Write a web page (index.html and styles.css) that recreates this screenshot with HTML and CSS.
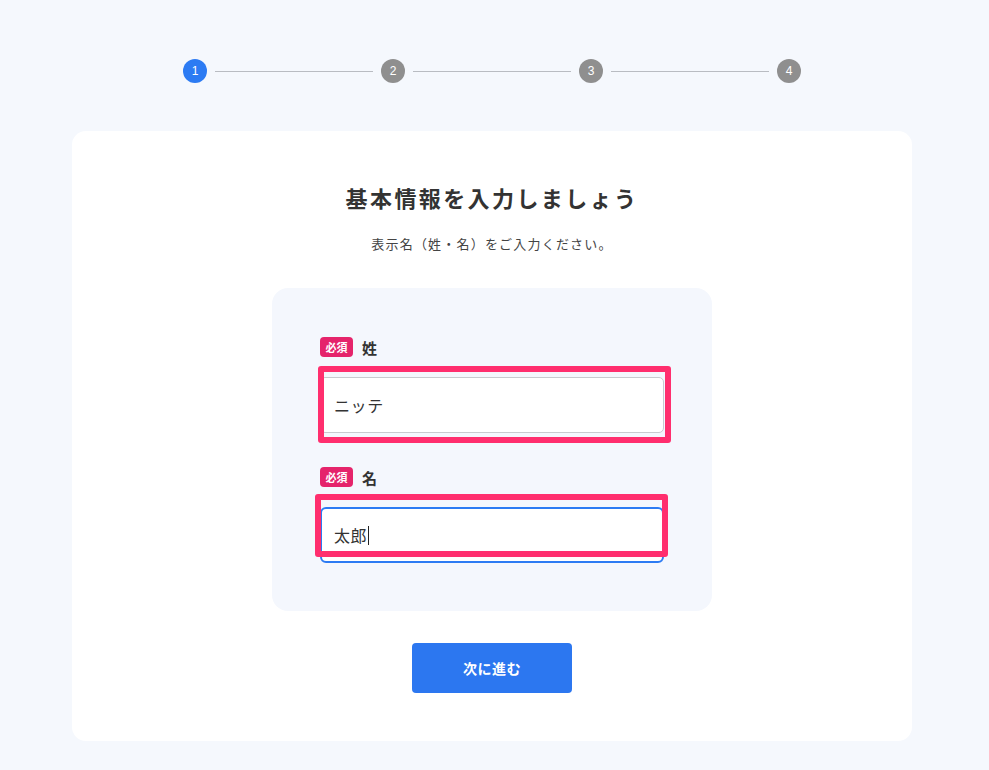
FILE: index.html
```html
<!DOCTYPE html>
<html lang="ja">
<head>
<meta charset="utf-8">
<title>基本情報を入力しましょう</title>
<link rel="stylesheet" href="styles.css">
</head>
<body>
<div class="page">
  <div class="stepper">
    <div class="step active">1</div>
    <div class="line"></div>
    <div class="step">2</div>
    <div class="line"></div>
    <div class="step">3</div>
    <div class="line"></div>
    <div class="step">4</div>
  </div>

  <div class="card">
    <h1 class="title">基本情報を入力しましょう</h1>
    <p class="subtitle">表示名（姓・名）をご入力ください。</p>

    <div class="form-box">
      <div class="field">
        <div class="label-row">
          <span class="badge">必須</span>
          <span class="label">姓</span>
        </div>
        <div class="input-wrap">
          <div class="input">ニッテ</div>
          <div class="highlight hl-first"></div>
        </div>
      </div>

      <div class="field">
        <div class="label-row">
          <span class="badge">必須</span>
          <span class="label">名</span>
        </div>
        <div class="input-wrap">
          <div class="input focused">太郎<span class="caret"></span></div>
          <div class="highlight hl-second"></div>
        </div>
      </div>
    </div>

    <button class="next-btn">次に進む</button>
  </div>
</div>
</body>
</html>
```

FILE: styles.css
```css
* { box-sizing: border-box; }

body {
  margin: 0;
  padding: 0 5px 0 0;
  background: #f5f8fd;
  font-family: "Noto Sans CJK JP", "Noto Sans", sans-serif;
  color: #333;
}

.page {
  width: 840px;
  margin: 0 auto;
  padding-top: 59px;
  padding-bottom: 29px;
}

.stepper {
  width: 618px;
  margin: 0 auto;
  display: flex;
  align-items: center;
  gap: 8px;
}

.step {
  width: 24px;
  height: 24px;
  border-radius: 50%;
  background: #8f8f8f;
  color: #fff;
  font-family: "Liberation Sans", Arial, sans-serif;
  font-size: 12px;
  display: flex;
  align-items: center;
  justify-content: center;
  flex: none;
}

.step.active { background: #2c7bf3; }

.line {
  flex: 1;
  height: 1px;
  background: #b9bcc2;
}

.card {
  margin-top: 48px;
  background: #fff;
  border-radius: 14px;
  padding: 50px 0 48px;
  display: flex;
  flex-direction: column;
  align-items: center;
}

.title {
  margin: 0;
  font-size: 22px;
  line-height: 32px;
  font-weight: 700;
  letter-spacing: 2.4px;
  color: #333;
}

.subtitle {
  margin: 21px 0 0;
  font-size: 13px;
  line-height: 20px;
  letter-spacing: 1.2px;
  color: #444;
}

.form-box {
  margin-top: 34px;
  width: 440px;
  background: #f4f7fd;
  border-radius: 16px;
  padding: 49px 48px 48px;
  display: flex;
  flex-direction: column;
  gap: 34px;
}

.label-row {
  display: flex;
  align-items: center;
  gap: 9px;
  height: 20px;
  margin-bottom: 20px;
}

.badge {
  width: 33px;
  height: 20px;
  border-radius: 4px;
  background: #e5246b;
  color: #fff;
  font-size: 11px;
  font-weight: 700;
  display: flex;
  align-items: center;
  justify-content: center;
}

.label {
  font-size: 15px;
  font-weight: 700;
  color: #333;
}

.input-wrap { position: relative; }

.input {
  height: 56px;
  border: 1px solid #c8cacf;
  border-radius: 5px;
  background: #fff;
  padding: 0 13px;
  font-size: 16px;
  letter-spacing: 0.6px;
  color: #333;
  display: flex;
  align-items: center;
}

.input.focused {
  border: 2px solid #2c7bf3;
  border-radius: 6px;
  padding-left: 12px;
}

.caret {
  display: inline-block;
  width: 1px;
  height: 19px;
  background: #222;
  margin-left: 1px;
}

.highlight {
  position: absolute;
  border: 6px solid #ff2e6e;
  border-radius: 3px;
  pointer-events: none;
}

.hl-first {
  left: -2px;
  top: -11px;
  width: 353px;
  height: 77px;
}

.hl-second {
  left: -5px;
  top: -13px;
  width: 353px;
  height: 63px;
}

.next-btn {
  margin-top: 32px;
  width: 160px;
  height: 50px;
  border: none;
  border-radius: 4px;
  background: #2c77f0;
  color: #fff;
  font-family: "Noto Sans CJK JP", sans-serif;
  font-size: 14px;
  font-weight: 700;
  letter-spacing: 0.5px;
}
```
